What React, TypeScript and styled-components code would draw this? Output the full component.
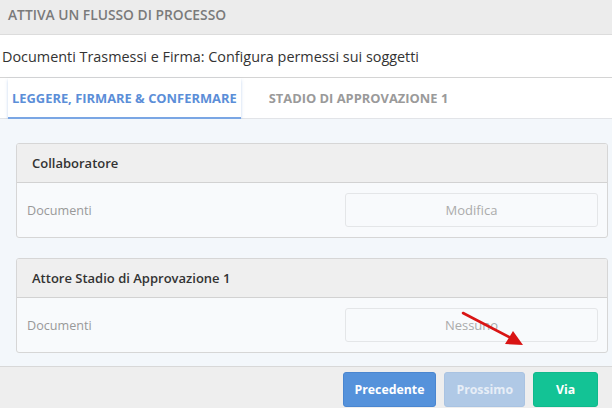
import React from "react";
import styled, { createGlobalStyle } from "styled-components";

const GlobalStyle = createGlobalStyle`
  html, body {
    margin: 0;
    padding: 0;
    background: #ffffff;
    font-family: "Open Sans", "Noto Sans", sans-serif;
  }
  * { box-sizing: border-box; }
`;

type Panel = {
  title: string;
  label: string;
  action: string;
};

const panels: Panel[] = [
  { title: "Collaboratore", label: "Documenti", action: "Modifica" },
  { title: "Attore Stadio di Approvazione 1", label: "Documenti", action: "Nessuno" },
];

export default function App() {
  return (
    <>
      <GlobalStyle />
      <StyledDialog>
        <StyledHeader>Attiva un flusso di processo</StyledHeader>
        <StyledSubtitle>
          Documenti Trasmessi e Firma: Configura permessi sui soggetti
        </StyledSubtitle>
        <StyledTabs>
          <StyledTab active>Leggere, firmare &amp; confermare</StyledTab>
          <StyledTab>Stadio di approvazione 1</StyledTab>
        </StyledTabs>
        <StyledContent>
          {panels.map((p) => (
            <StyledCard key={p.title}>
              <StyledCardHeader>{p.title}</StyledCardHeader>
              <StyledCardBody>
                <StyledLabel>{p.label}</StyledLabel>
                <StyledField>{p.action}</StyledField>
              </StyledCardBody>
            </StyledCard>
          ))}
          <StyledArrow width="70" height="40" viewBox="0 0 70 40">
            <line x1="2" y1="2" x2="52" y2="28" stroke="#d91414" strokeWidth="2.6" strokeLinecap="round" />
            <polygon points="62,34 44,33 52,20" fill="#d91414" />
          </StyledArrow>
        </StyledContent>
        <StyledFooter>
          <StyledButton variant="primary">Precedente</StyledButton>
          <StyledButton variant="disabled">Prossimo</StyledButton>
          <StyledButton variant="success">Via</StyledButton>
        </StyledFooter>
      </StyledDialog>
    </>
  );
}

const StyledDialog = styled.div`
  width: 612px;
  height: 408px;
  display: flex;
  flex-direction: column;
  overflow: hidden;
  background: #ffffff;
`;

const StyledHeader = styled.div`
  height: 35px;
  padding: 0 8px 5px;
  display: flex;
  align-items: center;
  background: #ececec;
  border-bottom: 1px solid #dcdcdc;
  color: #7a7a7a;
  font-size: 13.8px;
  font-weight: 600;
  text-transform: uppercase;
`;

const StyledSubtitle = styled.div`
  height: 43px;
  padding: 0 2px;
  display: flex;
  align-items: center;
  border-bottom: 1px solid #d4d4d4;
  color: #333333;
  font-size: 14.4px;
`;

const StyledTabs = styled.div`
  height: 41px;
  display: flex;
  gap: 8px;
  padding: 0 8px;
  background: #ffffff;
  border-bottom: 1px solid #e2e4e8;
`;

const StyledTab = styled.div<{ active?: boolean }>`
  display: flex;
  align-items: center;
  padding: 0 4px 0 ${({ active }) => (active ? "4px" : "20px")};
  font-size: 12.9px;
  font-weight: 700;
  text-transform: uppercase;
  color: ${({ active }) => (active ? "#5b8ed8" : "#9a9a9a")};
  border-bottom: 2px solid ${({ active }) => (active ? "#7aa6e4" : "transparent")};
  box-shadow: ${({ active }) => (active ? "0 2px 3px rgba(90,140,215,0.35)" : "none")};
  margin-bottom: -1px;
`;

const StyledContent = styled.div`
  position: relative;
  flex: 1;
  display: flex;
  flex-direction: column;
  gap: 20px;
  padding: 24px 4px 0 16px;
  background: #f3f7fb;
  border-bottom: 1px solid #d8d8d8;
`;

const StyledCard = styled.div`
  border: 1px solid #d6d6d6;
  border-radius: 3px;
  background: #f8fafc;
  overflow: hidden;
`;

const StyledCardHeader = styled.div`
  height: 39px;
  padding: 0 15px;
  display: flex;
  align-items: center;
  background: #efefef;
  border-bottom: 1px solid #d2d2d2;
  color: #333333;
  font-size: 13px;
  font-weight: 600;
`;

const StyledCardBody = styled.div`
  height: 54px;
  display: flex;
  align-items: center;
  justify-content: space-between;
  padding: 0 9px 0 10px;
`;

const StyledLabel = styled.span`
  color: #999999;
  font-size: 12.6px;
`;

const StyledField = styled.div`
  width: 253px;
  height: 34px;
  display: flex;
  align-items: center;
  justify-content: center;
  border: 1px solid #e4e6e8;
  border-radius: 3px;
  background: #f8fafc;
  color: #ababab;
  font-size: 13px;
`;

const StyledArrow = styled.svg`
  position: absolute;
  left: 461px;
  top: 192px;
`;

const StyledFooter = styled.div`
  height: 41px;
  display: flex;
  justify-content: flex-end;
  align-items: flex-start;
  gap: 8px;
  padding: 5px 14px 0 0;
  background: #eeeeee;
`;

const variants = {
  primary: { bg: "#5592db", border: "#4a86d0", color: "#ffffff" },
  disabled: { bg: "#b0c9e6", border: "#a9c3e2", color: "#e7eef7" },
  success: { bg: "#13c395", border: "#10b98c", color: "#ffffff" },
};

const StyledButton = styled.button<{ variant: keyof typeof variants }>`
  height: 35px;
  padding: 0 11px;
  min-width: 65px;
  border-radius: 3px;
  border: 1px solid ${({ variant }) => variants[variant].border};
  background: ${({ variant }) => variants[variant].bg};
  color: ${({ variant }) => variants[variant].color};
  font-family: "Open Sans", sans-serif;
  font-size: 12.3px;
  font-weight: 700;
`;
